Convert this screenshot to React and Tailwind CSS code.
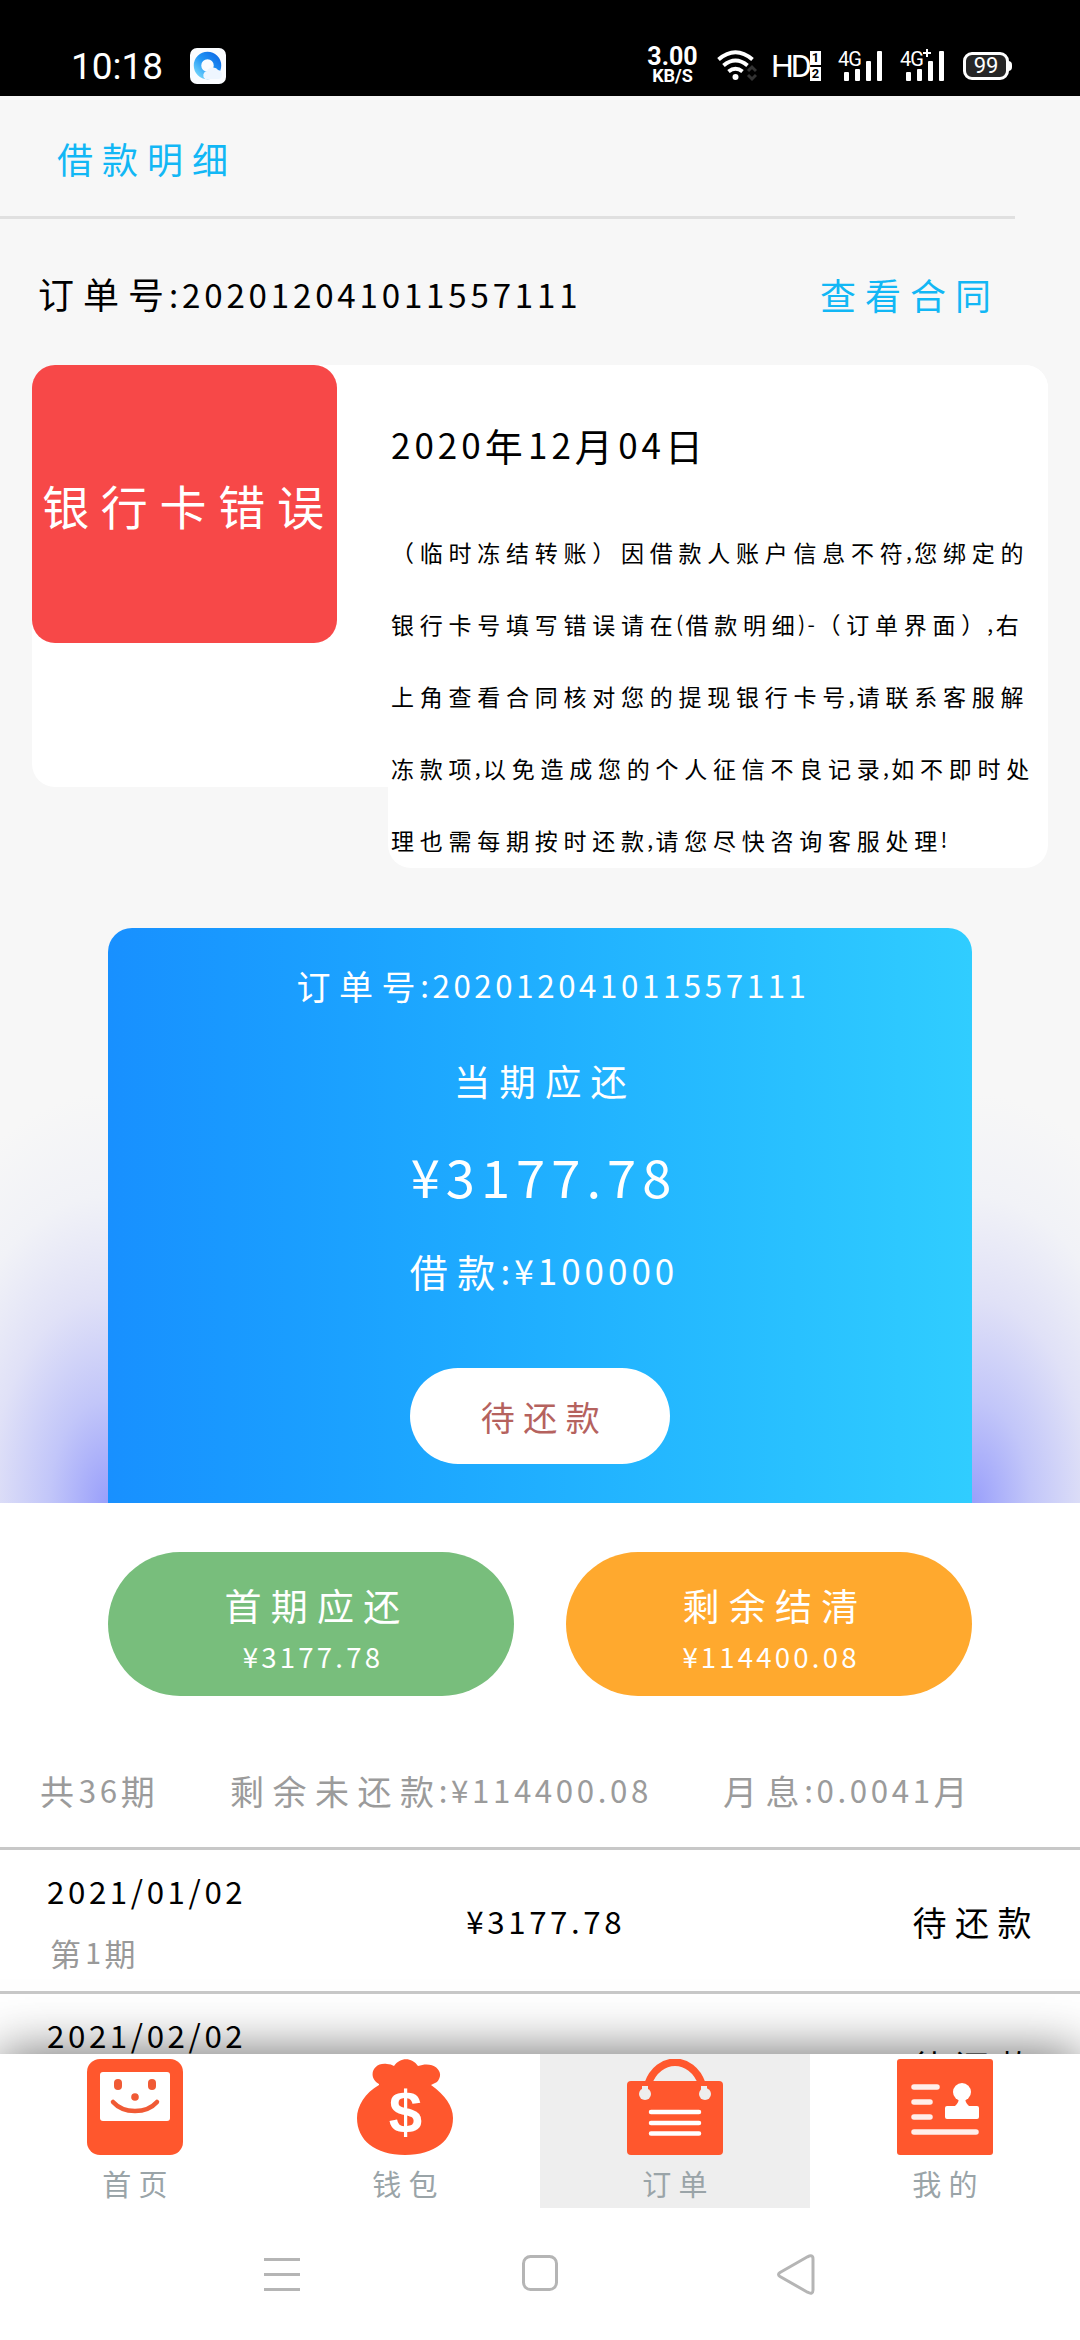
import React from 'react';

const CJK = /([\u3000-\u303f\u4e00-\u9fff\uff00-\uffef]+)/;

// Chinese runs are set wide, digits and punctuation sit tighter
const Script = ({ children, className = '' }) => (
  <span className={`inline-block whitespace-nowrap font-normal leading-none tracking-[0.25em] ${className}`}>
    {children.split(CJK).map((part, i) =>
      CJK.test(part) || !part ? part : (
        <span key={i} className={`relative -top-[0.05em] text-[0.92em] tracking-[0.115em] ${i > 0 ? '-ml-[0.12em]' : ''}`}>
          {part}
        </span>
      )
    )}
  </span>
);

const Signal = ({ label, plus }) => (
  <div className="relative w-[46px] h-[30px]">
    <span className="absolute left-0 -top-px text-[20px] leading-[18px] tracking-tighter">{label}</span>
    <svg className="absolute left-0 -top-1" width="46" height="34" viewBox="0 -4 46 34" fill="#fff">
      <rect x="6" y="21" width="5" height="9" rx="1" />
      <rect x="17" y="18" width="5" height="12" rx="1" />
      <rect x="28" y="10" width="5" height="20" rx="1" />
      <rect x="39" y="0" width="5" height="30" rx="1" />
      {plus && <path d="M23 2h8M27-2v8" stroke="#fff" strokeWidth="2" />}
    </svg>
  </div>
);

const StatusBar = () => (
  <div className="h-24 bg-black text-white flex justify-between pl-[71px] pr-[71px] pt-9 font-[Roboto,sans-serif]">
    <div className="flex items-center h-[60px] gap-[27px]">
      <span className="text-[37px] leading-none">10:18</span>
      <svg width="36" height="36" viewBox="0 0 36 36">
        <defs>
          <linearGradient id="ring" x1="0" y1="1" x2="1" y2="0">
            <stop offset="0" stopColor="#6fd2fb" />
            <stop offset="0.5" stopColor="#2196f5" />
            <stop offset="1" stopColor="#0f6ee8" />
          </linearGradient>
        </defs>
        <rect width="36" height="36" rx="7" fill="#fafcff" />
        <circle cx="17.500" cy="17.500" r="10" fill="none" stroke="url(#ring)" strokeWidth="7.500" />
        <path d="M15 31a4.500 4.500 0 0 1 2-8 6.500 6.500 0 0 1 11-1 5 5 0 0 1 4 5q0 4-4 4z" fill="#eef6ff" />
      </svg>
    </div>
    <div className="flex items-center h-[60px]">
      <div className="w-[47px] flex flex-col items-center font-bold mr-[21px]">
        <span className="text-[25px] leading-[20px]">3.00</span>
        <span className="text-[18px] leading-[18px]">KB/S</span>
      </div>
      <svg className="mr-[14px]" width="40" height="32" viewBox="0 0 40 32" fill="none" stroke="#fff" strokeWidth="4">
        <path d="M1.500 9.500Q18.500-5 35.500 9.500" />
        <path d="M6.500 15.500Q18.500 5.500 30.500 15.500" />
        <path d="M11.500 21.500Q18.500 16 25.500 21.500" />
        <circle cx="18.500" cy="27" r="3" fill="#fff" stroke="none" />
        <path d="m31 21 4-4 4 4M31 25l4 4 4-4" stroke="#333" strokeWidth="3" />
      </svg>
      <span className="text-[32px] leading-none tracking-[-3px] w-[39px]">HD</span>
      <div className="flex flex-col gap-[2px] mr-[17px]">
        <span className="w-[11px] h-[14px] bg-white text-black text-[13px] leading-[14px] font-bold text-center">1</span>
        <span className="w-[11px] h-[14px] bg-white text-black text-[13px] leading-[14px] font-bold text-center">2</span>
      </div>
      <Signal label="4G" />
      <div className="w-4" />
      <Signal label="4G" plus />
      <div className="relative ml-[17px] w-[46px] h-[28px] rounded-[9px] border-[3px] border-white bg-[#262626] flex items-center justify-center text-[22px] leading-none">
        99
        <span className="absolute -right-[6px] top-[6px] w-[4px] h-[10px] rounded-r bg-white" />
      </div>
    </div>
  </div>
);

const Notice = () => (
  <div className="relative mt-[20px] mx-8 w-[1016px] h-[422px] rounded-[23px] bg-white flex items-start">
    <div className="w-[305px] h-[278px] rounded-[23px] bg-[#f74848] text-white flex items-center justify-center shrink-0">
      <Script className="text-[47px] pl-[9px]">银行卡错误</Script>
    </div>
    <div className="ml-[51px] w-[660px] h-[503px] rounded-[23px] bg-white text-black pt-[61px] pl-[3px] flex flex-col items-start">
      <Script className="text-[38px]">2020年12月04日</Script>
      <div className="mt-[52px] flex flex-col items-start text-[23px]">
        {[
          '（临时冻结转账）因借款人账户信息不符,您绑定的',
          '银行卡号填写错误请在(借款明细)-（订单界面）,右',
          '上角查看合同核对您的提现银行卡号,请联系客服解',
          '冻款项,以免造成您的个人征信不良记录,如不即时处',
          '理也需每期按时还款,请您尽快咨询客服处理!',
        ].map((line) => (
          <div key={line} className="h-[72px] flex items-center">
            <Script>{line}</Script>
          </div>
        ))}
      </div>
    </div>
  </div>
);

const LoanCard = () => (
  <div className="mt-[141px] h-[575px] flex">
    <div className="w-[108px] bg-[radial-gradient(235px_410px_at_100%_100%,#999ffb_0%,#c2c6f9_25%,#e0e1f7_50%,#f1f2f7_75%,#f7f7f7_100%)]" />
    <div className="w-[864px] rounded-t-[24px] bg-linear-to-r from-[#1890ff] to-[#30cdff] text-white flex flex-col items-center">
      <Script className="text-[34px] mt-[41px] pl-[26px]">订单号:202012041011557111</Script>
      <Script className="text-[36.500px] mt-[60px] pl-[10px]">当期应还</Script>
      <Script className="text-[57px] mt-[48px] pl-[8px]">¥3177.78</Script>
      <Script className="text-[38px] mt-[47px] pl-[8px]">借款:¥100000</Script>
      <div className="mt-[78px] w-[260px] h-24 rounded-full bg-white text-[#b5625e] flex items-center justify-center">
        <Script className="text-[34px] pl-[9px] pt-[2px]">待还款</Script>
      </div>
    </div>
    <div className="w-[108px] bg-[radial-gradient(235px_410px_at_0%_100%,#999ffb_0%,#c2c6f9_25%,#e0e1f7_50%,#f1f2f7_75%,#f7f7f7_100%)]" />
  </div>
);

const Pill = ({ title, amount, className }) => (
  <div className={`w-[406px] h-36 rounded-full text-white flex flex-col items-center ${className}`}>
    <Script className="text-[37px] mt-[35px] pl-[12px]">{title}</Script>
    <Script className="text-[30px] mt-[17px] pl-[4px]">{amount}</Script>
  </div>
);

const Row = ({ date, term, amount, status }) => (
  <div className="h-36 border-t-[3px] border-[#c8c8c8] flex items-center justify-between pl-[47px] pr-[40px] text-[34px] text-black">
    <div className="w-[240px] flex flex-col items-start">
      <Script className="pt-[2px]">{date}</Script>
      <Script className="text-[31px] text-[#999] mt-[28px] pl-[3px]">{term}</Script>
    </div>
    <Script className="mr-[108px] pt-[2px]">{amount}</Script>
    <Script className="pt-[2px]">{status}</Script>
  </div>
);

const HomeIcon = () => (
  <svg width="96" height="96" viewBox="0 0 96 96">
    <rect width="96" height="96" rx="13" fill="#ff572d" />
    <rect x="13" y="13" width="70" height="49" rx="3" fill="#fff" />
    <g fill="#f05a35">
      <rect x="27" y="20" width="8" height="11" rx="4" />
      <rect x="61" y="20" width="8" height="11" rx="4" />
      <circle cx="48" cy="38" r="3.800" />
    </g>
    <path d="M26 43Q34 52 48 52T70 43" fill="none" stroke="#f05a35" strokeWidth="4.500" strokeLinecap="round" />
  </svg>
);

const WalletIcon = () => (
  <svg width="96" height="96" viewBox="0 0 96 96">
    <path d="M22 25C10 18 16 3 30 5q4 0 7 2c6-9 18-9 24 0 16-6 28 6 19 16l-6 3C88 36 96 47 96 59 96 81 78 96 48 96S0 81 0 59c0-12 8-25 22-33z" fill="#ff572d" />
    <text x="48.500" y="74" textAnchor="middle" fill="#fff" fontFamily="Liberation Sans" fontWeight="700" fontSize="60">$</text>
  </svg>
);

const OrderIcon = () => (
  <svg width="96" height="96" viewBox="0 0 96 96">
    <rect y="22" width="96" height="74" rx="4" fill="#ff572d" />
    <path d="M21 25C31-4 65-4 75 25" fill="none" stroke="#ff572d" strokeWidth="7.500" />
    <g fill="#eee">
      <circle cx="18" cy="35" r="6" />
      <circle cx="78" cy="35" r="6" />
      <path d="M15 27h6v5h-6zM74 27h6v5h-6z" />
    </g>
    <path d="M24 53h48M24 64h48M24 74.500h48" stroke="#fff" strokeWidth="4.500" strokeLinecap="round" />
  </svg>
);

const MineIcon = () => (
  <svg width="96" height="96" viewBox="0 0 96 96">
    <rect width="96" height="96" rx="3" fill="#ff572d" />
    <path d="M17 28h23M17 43h16M17 58h16M17 73h62" stroke="#fff" strokeOpacity=".9" strokeWidth="5.500" strokeLinecap="round" />
    <circle cx="65" cy="33" r="9" fill="#fff" />
    <path d="M62 38h6q0 6 4 9h8q2 0 2 2v9q0 2-2 2H50q-2 0-2-2v-9q0-2 2-2h8q4-3 4-9z" fill="#fff" />
  </svg>
);

const tabs = [
  { label: '首页', Icon: HomeIcon },
  { label: '钱包', Icon: WalletIcon },
  { label: '订单', Icon: OrderIcon, active: true },
  { label: '我的', Icon: MineIcon },
];

const TabBar = () => (
  <nav className="relative bg-white h-[154px] flex shadow-[0_0_50px_rgba(0,0,0,0.6)]">
    {tabs.map(({ label, Icon, active }) => (
      <div key={label} className={`w-[270px] flex flex-col items-center pt-[5px] ${active ? 'bg-[#eee]' : ''}`}>
        <Icon />
        <Script className="text-[29px] text-[#9aa4a8] mt-[14px] pl-[7px]">{label}</Script>
      </div>
    ))}
  </nav>
);

const SystemNav = () => (
  <div className="relative bg-white h-[132px] flex justify-between pl-[264px] pr-[265px] pt-[46px]">
    <svg width="36" height="40" viewBox="0 0 36 40" stroke="#b5b5b5" strokeWidth="3">
      <path d="M0 5.500h36M0 20.500h36M0 35.500h36" />
    </svg>
    <svg className="ml-[3px]" width="36" height="40" viewBox="0 0 36 40" fill="none" stroke="#b5b5b5" strokeWidth="3">
      <rect x="1.500" y="2.500" width="33" height="33" rx="7" />
    </svg>
    <svg width="38" height="42" viewBox="0 0 38 42" fill="none" stroke="#b5b5b5" strokeWidth="3">
      <path d="M3 18.500 30.500 2.800Q36 0 36 5v31q0 5-5.500 2.200L3 22.500q-3-2 0-4z" />
    </svg>
  </div>
);

export default function App() {
  return (
    <div className="w-[1080px] h-[2340px] overflow-hidden flex flex-col bg-[#f7f7f7] font-['Noto_Sans_CJK_SC',sans-serif]">
      <StatusBar />
      <div className="w-[1015px] h-[123px] border-b-[3px] border-[#e0e0e0] pl-[57px] flex items-center text-[#12b7f5]">
        <Script className="text-[36px] pt-[3px]">借款明细</Script>
      </div>
      <div className="h-[126px] pl-[38px] pr-[80px] pt-[24px] flex items-center justify-between">
        <Script className="text-[36px] text-black">订单号:202012041011557111</Script>
        <Script className="text-[36px] text-[#12b7f5]">查看合同</Script>
      </div>
      <Notice />
      <LoanCard />
      <div className="relative bg-white h-[551px] overflow-hidden shrink-0">
        <div className="flex justify-between px-[108px] pt-[49px]">
          <Pill title="首期应还" amount="¥3177.78" className="bg-[#78be7c]" />
          <Pill title="剩余结清" amount="¥114400.08" className="bg-[#ffa92e]" />
        </div>
        <div className="h-[151px] pl-10 pt-[38px] flex items-center text-[34px] text-[#9b9b9b]">
          <Script className="w-[190px]">共36期</Script>
          <Script className="w-[493px]">剩余未还款:¥114400.08</Script>
          <Script>月息:0.0041月</Script>
        </div>
        <Row date="2021/01/02" term="第1期" amount="¥3177.78" status="待还款" />
        <Row date="2021/02/02" term="第2期" amount="¥3177.78" status="待还款" />
      </div>
      <TabBar />
      <SystemNav />
    </div>
  );
}
